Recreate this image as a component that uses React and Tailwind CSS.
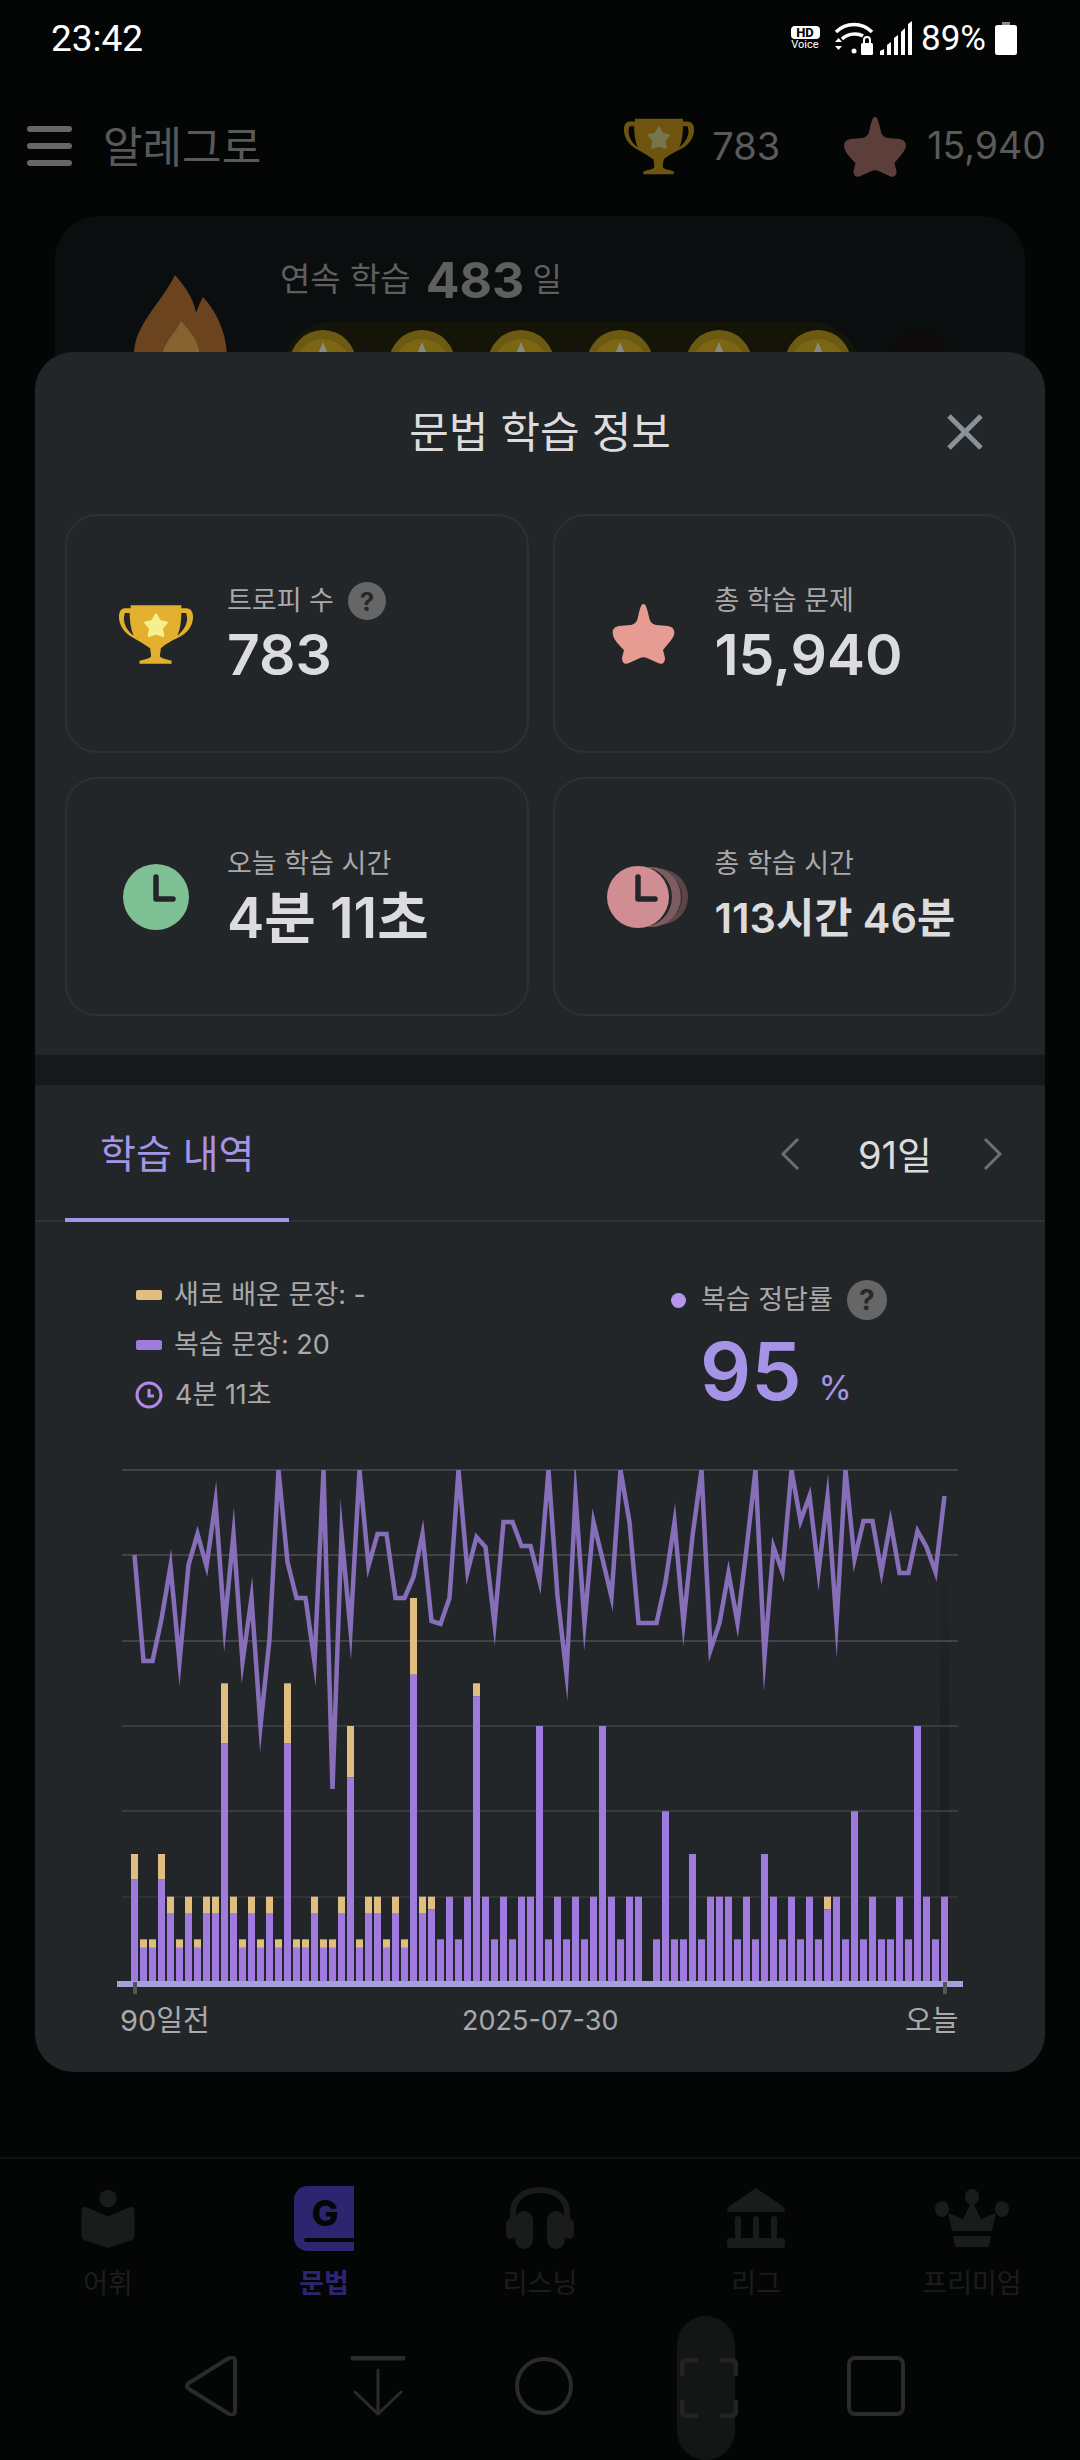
import React from 'react';

const totals = [
  30, 10, 10, 30, 20, 10, 20, 10, 20, 20, 70, 20, 10, 20, 10, 20, 10, 70, 10, 10, 20, 10, 10, 20, 60, 10, 20, 20, 10, 20, 10, 90, 20,
  20, 10, 20, 10, 20, 70, 20, 10, 20, 10, 20, 20, 60, 10, 20, 10, 20, 10, 20, 60, 20, 10, 20, 20, 0, 10, 40, 10, 10, 30, 10, 20, 20,
  20, 10, 20, 10, 30, 20, 10, 20, 10, 20, 10, 20, 20, 10, 40, 10, 20, 10, 10, 20, 10, 60, 20, 10, 20,
];
const purpleOverride = { 33: 17, 38: 67, 77: 17 };

// line points read off the chart, y in page pixels
const lineY = [
  1556, 1662, 1662, 1620, 1567, 1663, 1566, 1535, 1567, 1503, 1627, 1535, 1663, 1599, 1727, 1640, 1471, 1563, 1599, 1599, 1663, 1471,
  1790, 1535, 1631, 1471, 1567, 1535, 1535, 1599, 1599, 1578, 1535, 1622, 1625, 1599, 1471, 1573, 1538, 1548, 1625, 1523, 1523, 1547,
  1547, 1582, 1471, 1597, 1675, 1497, 1624, 1523, 1560, 1598, 1471, 1523, 1624, 1624, 1624, 1583, 1523, 1624, 1537, 1471, 1651, 1624,
  1574, 1624, 1550, 1471, 1658, 1548, 1573, 1471, 1522, 1497, 1573, 1498, 1624, 1471, 1560, 1522, 1522, 1573, 1523, 1574, 1574, 1532,
  1548, 1573, 1497,
];

const gridY = [1471, 1556, 1642, 1727, 1812, 1898];
const BASE = 1983;
const UNIT = 4.267;

const Trophy = ({ cup = '#E2B02E', star = '#F5F08F', className }) => (
  <svg viewBox="18 12 78 63" className={className}>
    <path
      fill={cup}
      fillRule="evenodd"
      d="M31 14H83V17H88C93 17 95 21 95 26C95 36 88 44 78 48C72 51 68 53 62 58L61 66C62 69 68 69 73 71V74H40V71C46 69 51 69 52 66L51 58C45 54 40 51 33 47C25 43 19 35 19 26C19 21 21 17 25 17H31ZM25 22H30C30 30 31 38 34 45C28 41 24 34 24 27ZM88 22H83C83 30 82 38 79 45C85 40 89 34 89 27Z"
    />
    <path
      fill={star}
      stroke={star}
      strokeWidth="3"
      strokeLinejoin="round"
      d="M57 24L60.5 30.5L67.5 32L62.5 37.5L64 45L57 42.5L50 45L51.5 37.5L46.5 32L53.5 30.5Z"
    />
  </svg>
);

const Star = ({ fill = '#E79C93', className }) => (
  <svg viewBox="0 0 63 61" className={className}>
    <path
      fill={fill}
      d="M31.5 1C34 1 35 5 37 14C38 19 40 21 44 22L56 23C62 24 63 28 62 32C60 37 54 43 51 47L53 55C53 60 50 62 46 60L35 55C33 54 30 54 28 55L17 60C13 62 10 60 10 55L12 47C8 43 2 37 1 32C0 28 1 24 7 23L19 22C23 21 25 19 26 14C28 5 29 1 31.5 1Z"
    />
  </svg>
);

const Help = ({ className }) => (
  <span className={`flex items-center justify-center rounded-full bg-[#666666] font-bold text-[#26282a] ${className}`}>?</span>
);

const ClockHands = () => <path d="M0 -20V2H17" fill="none" stroke="#232629" strokeWidth="5.5" strokeLinecap="round" strokeLinejoin="round" />;

const StatCard = ({ icon, label, help, value, valueClass = 'text-[57px] leading-[66px]' }) => (
  <div className="h-[239px] rounded-[32px] border-2 border-[#2e3033] flex items-center">
    <div className="w-[160px] shrink-0 flex justify-center pl-[18px]">{icon}</div>
    <div className="pt-[3px]">
      <div className="flex items-center gap-[14px] h-[38px] text-[27px] text-[#a9a9ab]">
        {label}
        {help && <Help className="w-[38px] h-[38px] text-[26px]" />}
      </div>
      <div className={`mt-[2px] font-semibold text-[#dcdcde] h-[66px] flex items-center ${valueClass}`}>{value}</div>
    </div>
  </div>
);

const Coin = () => (
  <svg viewBox="0 0 66 66" className="w-[66px] h-[66px]">
    <circle cx="33" cy="33" r="33" fill="#6d5a12" />
    <circle cx="33" cy="37" r="28" fill="#7c6614" />
    <path d="M33 12L38 24H28Z" fill="#8a8a80" />
  </svg>
);

const Chart = () => (
  <svg viewBox="117 1465 850 535" className="w-[850px] h-[535px] block">
    <defs>
      <linearGradient id="cursorFade" x1="0" y1="0" x2="0" y2="1">
        <stop offset="0" stopColor="#1c1e1f" stopOpacity="0" />
        <stop offset="0.45" stopColor="#1c1e1f" stopOpacity="1" />
        <stop offset="1" stopColor="#1c1e1f" stopOpacity="1" />
      </linearGradient>
      <clipPath id="plotClip">
        <rect x="117" y="1471" width="850" height="520" />
      </clipPath>
    </defs>
    <rect x="940" y="1540" width="9" height="443" fill="url(#cursorFade)" />
    {gridY.map((y, i) => (
      <rect key={y} x="122" y={y - 1} width="836" height="2" fill={i < 3 ? '#404446' : i < 5 ? '#383c3e' : '#303335'} />
    ))}
    {totals.map((t, i) => {
      if (!t) return null;
      const x = 131 + 9 * i;
      const purple = purpleOverride[i] ?? (i <= 32 ? t * 0.8 : t);
      return (
        <g key={i}>
          {purple < t && <rect x={x} y={BASE - t * UNIT} width="7" height={(t - purple) * UNIT} fill="#DFBE7F" />}
          <rect x={x} y={BASE - purple * UNIT} width="7" height={purple * UNIT} fill="#9F7BE0" />
        </g>
      );
    })}
    <polyline
      clipPath="url(#plotClip)"
      fill="none"
      stroke="#8F74C4"
      strokeOpacity="0.92"
      strokeWidth="4.5"
      strokeLinejoin="miter"
      strokeMiterlimit="20"
      points={lineY.map((y, i) => `${134.5 + 9 * i},${y}`).join(' ')}
    />
    <rect x="117" y="1982" width="846" height="6" fill="#A5A0D8" />
    <rect x="133" y="1983" width="4" height="12" fill="#555555" />
    <rect x="943" y="1983" width="4" height="12" fill="#555555" />
  </svg>
);

const navFill = '#1a1b1b';

const navTabs = [
  {
    label: '어휘',
    icon: (
      <svg viewBox="14 10 68 74" className="h-[66px] w-[60px]" fill={navFill}>
        <circle cx="48" cy="25" r="10" />
        <path d="M18 38C18 35 21 34 24 35L48 45L72 35C75 34 78 35 78 38V68C78 70 77 71 75 72L48 81L21 72C19 71 18 70 18 68Z" />
      </svg>
    ),
  },
  {
    label: '문법',
    active: true,
    icon: (
      <svg viewBox="0 0 60 66" className="h-[66px] w-[60px]">
        <path fill="#2E2570" d="M14 1H60V66H14C6 66 0 60 0 53V15C0 7 6 1 14 1Z" />
        <path d="M12 55H60" stroke="#040606" strokeWidth="4" strokeLinecap="round" />
        <text x="31" y="41" textAnchor="middle" fontFamily="Inter" fontWeight="800" fontSize="36" fill="#040606">G</text>
      </svg>
    ),
  },
  {
    label: '리스닝',
    icon: (
      <svg viewBox="0 0 70 62" className="h-[62px] w-[70px]" fill={navFill}>
        <path d="M8 36V26C8 11 20 3 35 3S62 11 62 26V36" fill="none" stroke={navFill} strokeWidth="6" />
        <rect x="10" y="24" width="18" height="38" rx="9" />
        <rect x="42" y="24" width="18" height="38" rx="9" />
        <rect x="1" y="32" width="10" height="20" rx="5" />
        <rect x="59" y="32" width="10" height="20" rx="5" />
      </svg>
    ),
  },
  {
    label: '리그',
    icon: (
      <svg viewBox="0 0 58 60" className="h-[60px] w-[58px]" fill={navFill}>
        <path d="M29 0L54 17C57 19 58 21 58 24H0C0 21 1 19 4 17Z" />
        <rect x="8" y="28" width="6" height="24" rx="3" />
        <rect x="26" y="28" width="6" height="24" rx="3" />
        <rect x="44" y="28" width="6" height="24" rx="3" />
        <rect x="0" y="50" width="58" height="10" rx="3" />
      </svg>
    ),
  },
  {
    label: '프리미엄',
    icon: (
      <svg viewBox="0 0 74 58" className="h-[58px] w-[74px]" fill={navFill}>
        <ellipse cx="37" cy="8" rx="7" ry="8" />
        <ellipse cx="7" cy="20" rx="7" ry="8" />
        <ellipse cx="67" cy="20" rx="7" ry="8" />
        <path d="M37 12L46 30L61 24L57 42H17L13 24L28 30Z" />
        <path d="M18 47H56L54 58H20Z" />
      </svg>
    ),
  },
];

const sysStroke = '#2a2b2b';

export default function App() {
  return (
    <div className="relative h-[2460px] w-[1080px] overflow-hidden bg-[#040606] flex flex-col [font-family:Inter,'Noto_Sans_CJK_KR',sans-serif]">
      {/* status bar */}
      <div className="h-[76px] shrink-0 flex items-center justify-between pl-[51px] pr-[63px] text-white [font-family:Roboto,sans-serif]">
        <span className="text-[37px] leading-none">23:42</span>
        <div className="flex items-center">
          <div className="flex flex-col items-center w-[32px] mr-[13px]">
            <span className="bg-white text-[#040606] rounded-[4px] text-[13px] font-extrabold leading-[13px] w-[29px] text-center">HD</span>
            <span className="text-[11px] leading-[12px]">Voice</span>
          </div>
          <svg viewBox="0 0 40 34" className="w-[40px] h-[34px] mr-[6px]" fill="none" stroke="#fff" strokeWidth="3.5">
            <path d="M2 11C12 1 28 1 38 11" />
            <path d="M8 18C14 12 24 12 29 15" />
            <circle cx="20" cy="30" r="2.5" fill="#fff" stroke="none" />
            <path d="M1 21H8L4.5 17ZM1 25H8L4.5 29Z" fill="#fff" stroke="none" />
            <rect x="27" y="22" width="12" height="12" rx="1.5" fill="#fff" stroke="none" />
            <path d="M30 22V19C30 15 36 15 36 19V22" strokeWidth="2" />
          </svg>
          <svg viewBox="0 0 32 34" className="w-[32px] h-[34px] mr-[9px]" fill="#fff">
            <path d="M0 34V30L4 28V34ZM7 34V24L11 21V34ZM14 34V17L18 14V34ZM21 34V11L25 7V34ZM28 34V3L32 0V34Z" />
          </svg>
          <span className="text-[35px] leading-none w-[68px]">89%</span>
          <svg viewBox="0 0 22 33" className="w-[22px] h-[33px] ml-[6px]" fill="#fff">
            <rect x="7" y="0" width="8" height="4" fill="#888" />
            <rect x="0" y="3" width="22" height="30" rx="2.5" />
          </svg>
        </div>
      </div>

      {/* app bar, dimmed */}
      <div className="h-[140px] shrink-0 flex items-center pl-[27px] pr-[34px]">
        <div className="w-[45px] flex flex-col gap-[11px]">
          <div className="h-[6px] rounded-full bg-[#666666]" />
          <div className="h-[6px] rounded-full bg-[#666666]" />
          <div className="h-[6px] rounded-full bg-[#666666]" />
        </div>
        <span className="ml-[31px] mt-[2px] text-[43px] text-[#595959]">알레그로</span>
        <div className="ml-auto flex items-center">
          <Trophy cup="#6e540e" star="#77754a" className="w-[72px] h-[60px]" />
          <span className="ml-[17px] text-[38px] text-[#5a5a5a]">783</span>
          <Star fill="#5C3F3A" className="ml-[63px] w-[64px] h-[61px]" />
          <span className="ml-[20px] text-[37.5px] text-[#5a5a5a]">15,940</span>
        </div>
      </div>

      {/* streak card, mostly under the sheet */}
      <div className="mx-[55px] h-[900px] shrink-0 rounded-[44px] bg-[#0b0e0f] pl-[79px] pt-[32px] flex gap-[52px]">
        <svg viewBox="0 0 94 110" className="w-[94px] h-[110px] mt-[27px]">
          <path fill="#6B431F" d="M41 0C50 10 60 24 62 38C64 32 67 26 69 22C82 36 93 58 93 82C93 100 70 110 47 110C20 110 0 100 0 80C0 50 26 30 41 0Z" />
          <path fill="#85632F" d="M47 46C53 54 66 64 66 84C66 100 28 100 28 84C28 68 41 60 47 46Z" />
        </svg>
        <div>
          <div className="flex items-center text-[#5f5f5f] h-[64px]">
            <span className="text-[33px]">연속 학습</span>
            <span className="ml-[15px] text-[50px] font-bold">483</span>
            <span className="ml-[8px] text-[32px]">일</span>
          </div>
          <div className="flex items-center mt-[10px] ml-[3px]">
            <div className="w-[577px] h-[120px] rounded-[48px] bg-[#141408] pl-[7px] pt-[8px] flex items-start gap-[33px]">
              <Coin />
              <Coin />
              <Coin />
              <Coin />
              <Coin />
              <Coin />
            </div>
            <div className="ml-[30px] -mt-[44px] w-[58px] h-[58px] rounded-full bg-[#0f0a0c]" />
          </div>
        </div>
      </div>

      {/* bottom navigation, dimmed */}
      <div className="mt-auto h-[303px] shrink-0 border-t-2 border-[#0e1212] flex flex-col">
        <div className="grid grid-cols-5 h-[157px] pt-[26px]">
          {navTabs.map((t) => (
            <div key={t.label} className="flex flex-col items-center">
              <div className="h-[66px] flex items-center">{t.icon}</div>
              <span className={`mt-[16px] text-[27px] leading-[34px] ${t.active ? 'font-bold text-[#2E2570]' : 'text-[#1c1d1d]'}`}>{t.label}</span>
            </div>
          ))}
        </div>
        <div className="flex items-start gap-[108px] pl-[183px] pt-[40px]">
          <svg viewBox="0 0 58 60" className="w-[58px] h-[60px]" fill="none" stroke={sysStroke} strokeWidth="4" strokeLinejoin="round">
            <path d="M6 27L46 2C50 0 52 2 52 5V55C52 58 50 60 46 58L6 33C3 31 3 29 6 27Z" />
          </svg>
          <svg viewBox="0 0 58 60" className="w-[58px] h-[60px]" fill="none" stroke={sysStroke} strokeLinecap="round" strokeLinejoin="round">
            <path d="M4 2H54" strokeWidth="5" />
            <path d="M29 14V58M6 36L29 58L52 36" strokeWidth="3" />
          </svg>
          <svg viewBox="0 0 58 60" className="w-[58px] h-[60px]" fill="none" stroke={sysStroke} strokeWidth="4">
            <circle cx="29" cy="30" r="27" />
          </svg>
          <div className="w-[58px] h-[60px]" />
          <svg viewBox="0 0 58 60" className="w-[58px] h-[60px]" fill="none" stroke={sysStroke} strokeWidth="4">
            <rect x="2" y="2" width="54" height="56" rx="6" />
          </svg>
        </div>
      </div>

      {/* edge-to-edge gesture pill with the capture brackets */}
      <div className="absolute left-[677px] top-[2316px] w-[58px] h-[144px] rounded-full bg-[#141515]">
        <svg viewBox="0 0 58 60" className="absolute left-[3px] top-[42px] w-[58px] h-[60px]" fill="none" stroke="#222323" strokeWidth="5">
          <path d="M2 18V8C2 4 4 2 8 2H18M40 2H50C54 2 56 4 56 8V18M56 42V52C56 56 54 58 50 58H40M18 58H8C4 58 2 56 2 52V42" />
        </svg>
      </div>

      {/* grammar info sheet */}
      <div className="absolute left-[35px] top-[352px] w-[1010px] h-[1720px] rounded-[38px] bg-[#232629] flex flex-col">
        <div className="relative h-[162px] shrink-0 flex items-center justify-center">
          <span className="text-[43px] leading-none text-[#dcdcde] -mt-[2px]">문법 학습 정보</span>
          <svg viewBox="0 0 36 36" className="absolute left-[912px] top-[62px] w-[36px] h-[36px]" fill="none" stroke="#8a9299" strokeWidth="5">
            <path d="M2 2L34 34M34 2L2 34" />
          </svg>
        </div>
        <div className="grid grid-cols-2 gap-x-[24px] gap-y-[24px] pl-[30px] pr-[29px]">
          <StatCard
            label="트로피 수"
            help
            value="783"
            icon={<Trophy className="w-[76px] h-[62px]" />}
          />
          <StatCard label="총 학습 문제" value="15,940" icon={<Star className="w-[63px] h-[61px]" />} />
          <StatCard
            label="오늘 학습 시간"
            value="4분 11초"
            valueClass="text-[56px] leading-[66px]"
            icon={
              <svg viewBox="-33 -33 66 66" className="w-[66px] h-[66px]">
                <circle r="33" fill="#7FC194" />
                <ClockHands />
              </svg>
            }
          />
          <StatCard
            label="총 학습 시간"
            value="113시간 46분"
            valueClass="text-[41.5px] leading-[66px]"
            icon={
              <svg viewBox="-33 -33 84 66" className="w-[84px] h-[66px] -ml-[10px] -mr-[16px]">
                <circle cx="22" r="28" fill="#5d4447" />
                <circle cx="17" r="27" fill="#232629" />
                <circle cx="13" r="30" fill="#7b5c60" />
                <circle cx="4" r="30" fill="#232629" />
                <circle r="31" fill="#D08D93" />
                <ClockHands />
              </svg>
            }
          />
        </div>

        <div className="h-[30px] shrink-0 mt-[39px] bg-[#17181b]" />

        {/* tab row */}
        <div className="relative h-[137px] shrink-0 border-b-2 border-[#303235] flex items-center">
          <div className="absolute left-[30px] bottom-[-2px] w-[224px] h-[4px] bg-[#a594e6]" />
          <span className="ml-[65px] mt-[4px] text-[39px] text-[#a594e6]">학습 내역</span>
          <svg viewBox="0 0 20 34" className="absolute left-[745px] top-[52px] w-[20px] h-[34px]" fill="none" stroke="#667078" strokeWidth="3">
            <path d="M18 2L3 17L18 32" />
          </svg>
          <span className="absolute left-[823px] top-[49px] text-[38px] leading-[42px] text-[#dcdcde]">91일</span>
          <svg viewBox="0 0 20 34" className="absolute left-[948px] top-[52px] w-[20px] h-[34px]" fill="none" stroke="#667078" strokeWidth="3">
            <path d="M2 2L17 17L2 32" />
          </svg>
        </div>

        {/* legend and review rate */}
        <div className="flex h-[242px] shrink-0 pl-[101px] pt-[55px]">
          <div className="w-[535px] flex flex-col gap-[14px] text-[27px] leading-[36px] text-[#a9a9ab]">
            <div className="flex items-center gap-[12px]">
              <span className="w-[26px] h-[10px] rounded-[2px] bg-[#DFBE7F]" />
              새로 배운 문장: -
            </div>
            <div className="flex items-center gap-[12px]">
              <span className="w-[26px] h-[10px] rounded-[2px] bg-[#9F7BE0]" />
              복습 문장: 20
            </div>
            <div className="flex items-center gap-[12px]">
              <svg viewBox="0 0 28 28" className="w-[28px] h-[28px] -ml-px" fill="none" stroke="#B388E8" strokeWidth="3">
                <circle cx="14" cy="14" r="12" />
                <path d="M14 8V15H19" />
              </svg>
              4분 11초
            </div>
          </div>
          <div className="mt-[3px]">
            <div className="flex items-center h-[40px] text-[27px] text-[#a9a9ab]">
              <span className="w-[15px] h-[15px] rounded-full bg-[#B595EC]" />
              <span className="ml-[15px]">복습 정답률</span>
              <Help className="ml-[14px] w-[40px] h-[40px] text-[28px]" />
            </div>
            <div className="flex items-baseline ml-[29px] text-[#a594e6] mt-[11px]">
              <span className="text-[80px] leading-[80px] font-semibold">95</span>
              <span className="ml-[17px] text-[34px] leading-none">%</span>
            </div>
          </div>
        </div>

        {/* chart */}
        <div className="ml-[82px]">
          <Chart />
        </div>
        <div className="relative h-[40px] leading-[40px] text-[#a9a9ab]">
          <span className="absolute left-[85px] top-[2px] text-[29px]">90일전</span>
          <span className="absolute left-[427px] top-[2px] text-[27px]">2025-07-30</span>
          <span className="absolute left-[870px] top-[2px] text-[29px]">오늘</span>
        </div>
      </div>
    </div>
  );
}
